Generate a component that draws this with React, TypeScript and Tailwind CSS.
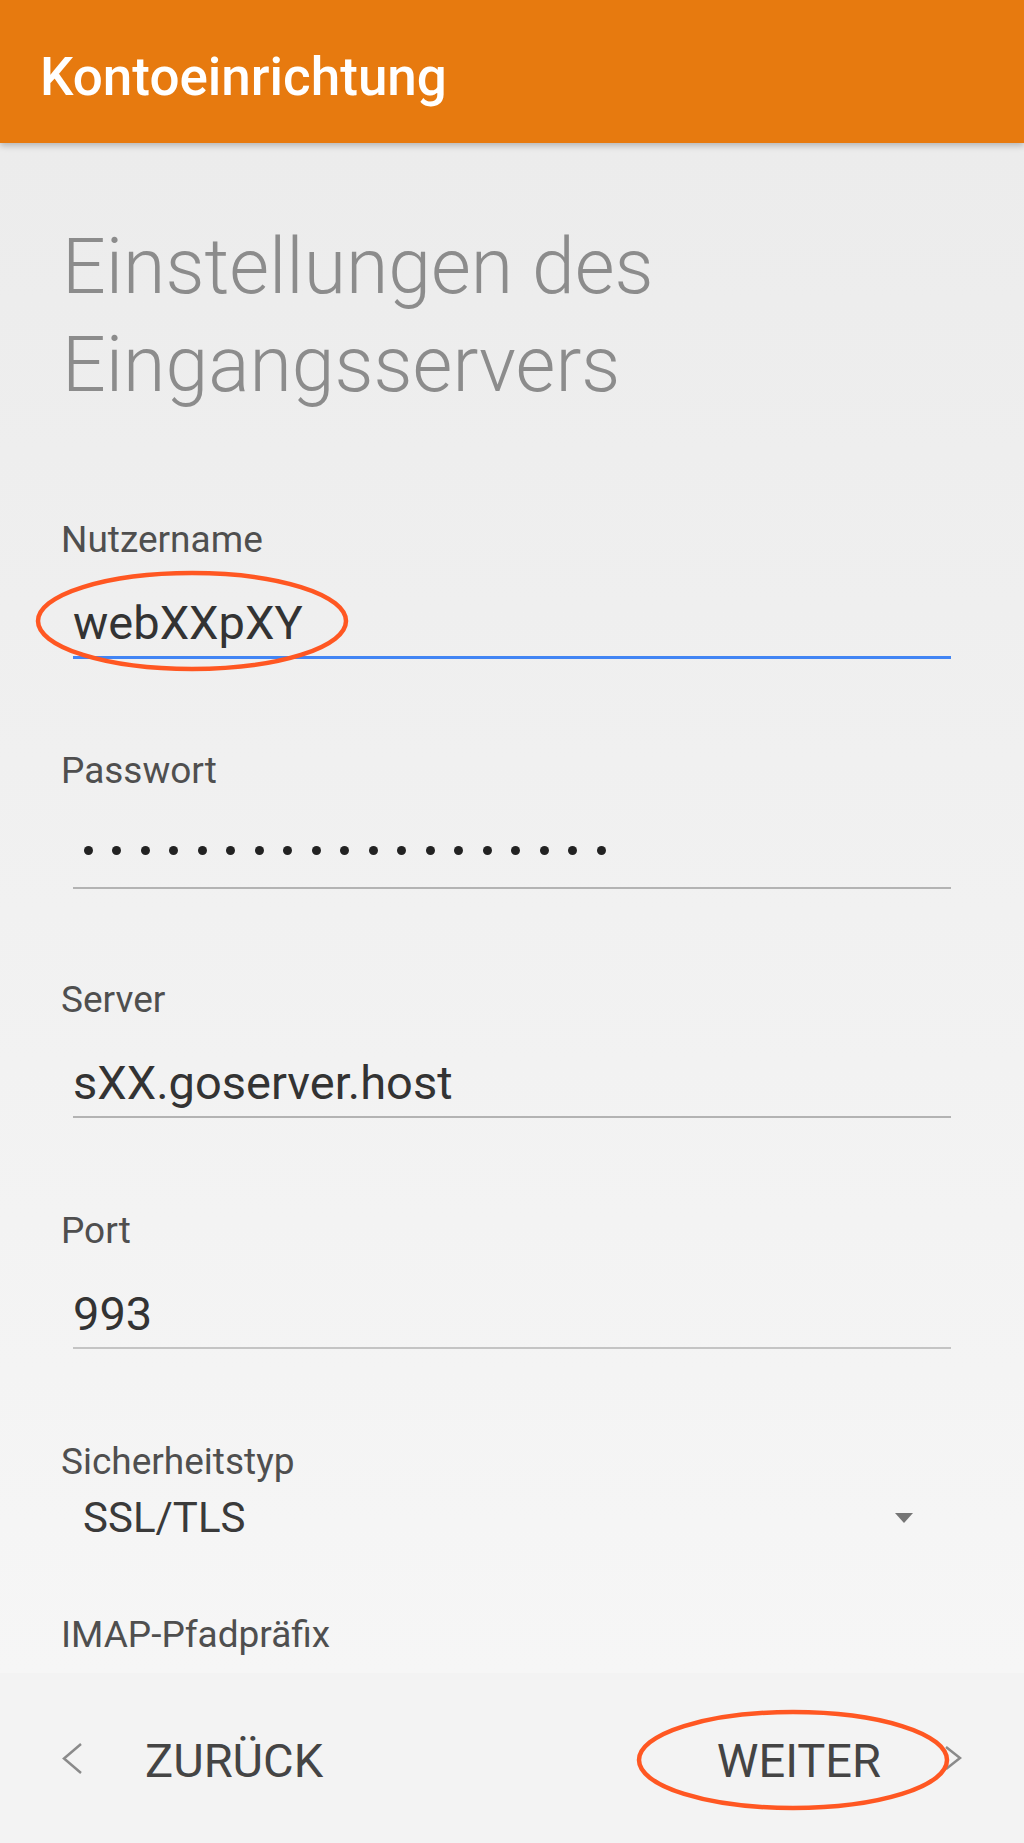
import type { ReactNode } from 'react';

interface FieldProps {
  label: string;
  children: ReactNode;
  lineClass?: string;
  className?: string;
}

function Field({ label, children, lineClass = 'h-[2px] bg-[#b3b3b3]', className = '' }: FieldProps) {
  return (
    <div className={className}>
      <div className="pl-[61px] text-[37px] leading-[40px] text-[#4f4f4f]">{label}</div>
      <div className="mx-[73px] mt-[37px] h-[52px] text-[47px] leading-[52px] text-[#333333]">{children}</div>
      <div className={`mx-[73px] mt-[7px] ${lineClass}`} />
    </div>
  );
}

// hand-drawn style markers over the screenshot
function Marker({ className }: { className: string }) {
  return (
    <svg className={`absolute ${className}`} width="314" height="102" viewBox="0 0 314 102" fill="none">
      <ellipse cx="157" cy="51" rx="154" ry="48" stroke="#ff5722" strokeWidth="4.5" />
    </svg>
  );
}

export default function App() {
  const dots = Array.from({ length: 19 });

  return (
    <div className="relative flex h-[1843px] w-[1024px] flex-col overflow-hidden font-['Roboto',sans-serif]">
      {/* Toolbar */}
      <div className="relative z-10 h-[143px] shrink-0 bg-[#e77a0f] pl-[40px] pt-[47px] text-[53px] font-medium leading-[60px] text-white shadow-[0_3px_6px_rgba(0,0,0,0.22)]">
        Kontoeinrichtung
      </div>

      {/* Form */}
      <div className="flex-1 overflow-hidden bg-gradient-to-b from-[#ececec] to-[#f6f6f6]">
        <h1 className="pl-[62px] pt-[75px] text-[77px] font-light leading-[98px] text-[#8c8c8c]">
          Einstellungen des
          <br />
          Eingangsservers
        </h1>

        <Field label="Nutzername" className="mt-[106px]" lineClass="h-[3px] bg-[#4285f4]">
          webXXpXY
        </Field>

        <Field label="Passwort" className="mt-[92px]">
          <div className="flex h-[52px] items-center gap-[19.5px] pb-[8px] pl-[10.5px]">
            {dots.map((_, i) => (
              <span key={i} className="h-[9px] w-[9px] rounded-full bg-[#222222]" />
            ))}
          </div>
        </Field>

        <Field label="Server" className="mt-[91px]">
          sXX.goserver.host
        </Field>

        <Field label="Port" className="mt-[93px]" lineClass="h-[2px] bg-[#c4c4c4]">
          993
        </Field>

        <div className="mt-[93px]">
          <div className="pl-[61px] text-[37px] leading-[40px] text-[#4f4f4f]">Sicherheitstyp</div>
          <div className="mt-[13px] flex h-[46px] items-center justify-between pl-[83px] pr-[111px]">
            <span className="text-[42px] leading-[46px] text-[#3a3a3a]">SSL/TLS</span>
            <svg width="18" height="10" viewBox="0 0 18 10">
              <polygon points="0,0 18,0 9,10" fill="#757575" />
            </svg>
          </div>
        </div>

        <div className="mt-[74px] pl-[61px] text-[37px] leading-[40px] text-[#4f4f4f]">IMAP-Pfadpräfix</div>
      </div>

      {/* Bottom navigation */}
      <div className="h-[170px] shrink-0 bg-[#f3f3f3] pt-[61px]">
        <div className="flex h-[54px] items-center justify-between px-[62px] text-[47px] leading-[54px] text-[#444444]">
          <div className="flex items-center gap-[63px]">
            <svg className="mb-[6px]" width="20" height="31" viewBox="0 0 20 31" fill="none">
              <polyline points="19,1 2,15.5 19,30" stroke="#8a8a8a" strokeWidth="2.5" />
            </svg>
            <span>ZURÜCK</span>
          </div>
          <div className="flex items-center gap-[64px]">
            <span>WEITER</span>
            <svg className="mb-[6px]" width="17" height="24" viewBox="0 0 17 24" fill="none">
              <polyline points="1,1 15,12 1,23" stroke="#8a8a8a" strokeWidth="2.5" />
            </svg>
          </div>
        </div>
      </div>

      <Marker className="left-[35px] top-[570px]" />
      <Marker className="left-[636px] top-[1709px]" />
    </div>
  );
}
